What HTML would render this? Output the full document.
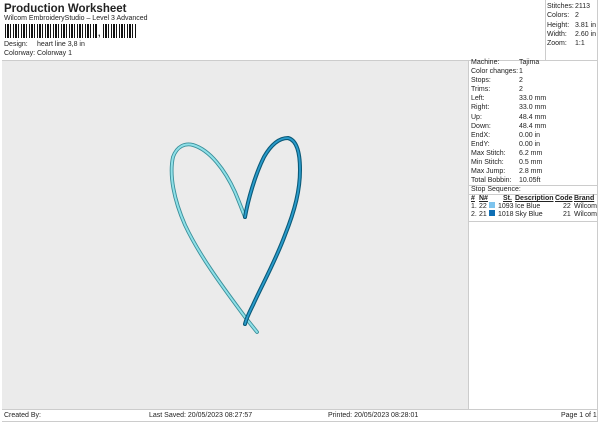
<!DOCTYPE html>
<html><head><meta charset="utf-8"><style>
*{margin:0;padding:0;box-sizing:border-box}
body{width:600px;height:424px;background:#fff;font-family:"Liberation Sans",sans-serif;color:#222;position:relative;overflow:hidden;font-size:7px}
.a{position:absolute;white-space:nowrap;line-height:8px}
.b{font-weight:bold}
.u{text-decoration:underline;font-weight:bold}
</style></head><body>
<div class="a b" style="left:4px;top:3px;font-size:11.5px;line-height:13px">Production Worksheet</div>
<div class="a" style="left:4px;top:15px">Wilcom EmbroideryStudio – Level 3 Advanced</div>
<div class="a" style="left:5px;top:24px;width:92px;height:14px;background:repeating-linear-gradient(90deg,#111 0 1px,#fff 1px 2px,#111 2px 4px,#fff 4px 5px,#111 5px 6px,#fff 6px 8px)"></div>
<div class="a b" style="left:98px;top:29px;font-size:9px">,</div>
<div class="a" style="left:103px;top:24px;width:34px;height:14px;background:repeating-linear-gradient(90deg,#111 0 1px,#fff 1px 2px,#111 2px 4px,#fff 4px 5px,#111 5px 6px,#fff 6px 8px)"></div>
<div class="a" style="left:4px;top:41px">Design:</div><div class="a" style="left:37px;top:41px">heart line 3,8 in</div>
<div class="a" style="left:4px;top:50px">Colorway:</div><div class="a" style="left:37px;top:50px">Colorway 1</div>
<div class="a" style="left:545px;top:0;width:53px;height:60px;border-left:1px solid #ccc"></div>
<div class="a" style="left:547px;top:3px">Stitches:</div><div class="a" style="left:575px;top:3px">2113</div>
<div class="a" style="left:547px;top:12px">Colors:</div><div class="a" style="left:575px;top:12px">2</div>
<div class="a" style="left:547px;top:22px">Height:</div><div class="a" style="left:575px;top:22px">3.81 in</div>
<div class="a" style="left:547px;top:31px">Width:</div><div class="a" style="left:575px;top:31px">2.60 in</div>
<div class="a" style="left:547px;top:40px">Zoom:</div><div class="a" style="left:575px;top:40px">1:1</div>
<div class="a" style="left:2px;top:60px;width:596px;height:1px;background:#ccc"></div>
<div class="a" style="left:2px;top:61px;width:466px;height:348px;background:#ebebeb"></div>
<div class="a" style="left:597px;top:0;width:1px;height:422px;background:#ccc"></div>
<div class="a" style="left:468px;top:61px;width:1px;height:348px;background:#ccc"></div>
<svg class="a" style="left:0;top:0" width="600" height="424">
<path d="M257,332 L245,317 C225,290 200,257 185,225 C174,200 169,175 173,157 C177,146 185,143 193,145 C210,150 225,170 235,192 C240,204 243,212 245,217" fill="none" stroke="#3b8f9a" stroke-width="3.8" stroke-linecap="round"/>
<path d="M257,332 L245,317 C225,290 200,257 185,225 C174,200 169,175 173,157 C177,146 185,143 193,145 C210,150 225,170 235,192 C240,204 243,212 245,217" fill="none" stroke="#8fe0e8" stroke-width="2" stroke-linecap="round"/>
<path d="M245,217 C248,200 255,175 264,157 C272,143 280,138 288,138 C296,140 300,150 300,170 C300,190 295,210 285,235 C275,262 262,285 253,305 C249,313 246,320 245,324" fill="none" stroke="#0b5a78" stroke-width="4" stroke-linecap="round"/>
<path d="M245,217 C248,200 255,175 264,157 C272,143 280,138 288,138 C296,140 300,150 300,170 C300,190 295,210 285,235 C275,262 262,285 253,305 C249,313 246,320 245,324" fill="none" stroke="#2a9ccc" stroke-width="1.8" stroke-linecap="round"/>
</svg>
<div class="a" style="left:469px;top:185px;width:128px;height:1px;background:#ccc"></div>
<div class="a" style="left:469px;top:194px;width:128px;height:1px;background:#ccc"></div>
<div class="a" style="left:469px;top:221px;width:128px;height:1px;background:#ccc"></div>
<div class="a" style="left:471px;top:186px">Stop Sequence:</div>
<div class="a u" style="left:471px;top:195px">#</div><div class="a u" style="left:479px;top:195px">N#</div><div class="a u" style="left:503px;top:195px">St.</div><div class="a u" style="left:515px;top:195px">Description</div><div class="a u" style="left:555px;top:195px">Code</div><div class="a u" style="left:574px;top:195px">Brand</div>
<div class="a" style="left:471px;top:203px">1.</div><div class="a" style="left:479px;top:203px">22</div><div class="a" style="left:489px;top:202px;width:6px;height:6px;background:#7ec4ee"></div><div class="a" style="left:498px;top:203px">1093</div><div class="a" style="left:515px;top:203px">Ice Blue</div><div class="a" style="left:563px;top:203px">22</div><div class="a" style="left:574px;top:203px">Wilcom</div>
<div class="a" style="left:471px;top:211px">2.</div><div class="a" style="left:479px;top:211px">21</div><div class="a" style="left:489px;top:210px;width:6px;height:6px;background:#0f6fb5"></div><div class="a" style="left:498px;top:211px">1018</div><div class="a" style="left:515px;top:211px">Sky Blue</div><div class="a" style="left:563px;top:211px">21</div><div class="a" style="left:574px;top:211px">Wilcom</div>
<div class="a" style="left:2px;top:409px;width:596px;height:1px;background:#ccc"></div>
<div class="a" style="left:2px;top:421px;width:596px;height:1px;background:#ccc"></div>
<div class="a" style="left:4px;top:412px">Created By:</div>
<div class="a" style="left:149px;top:412px">Last Saved: 20/05/2023 08:27:57</div>
<div class="a" style="left:328px;top:412px">Printed: 20/05/2023 08:28:01</div>
<div class="a" style="left:561px;top:412px">Page 1 of 1</div>
<div class="a" style="left:471px;top:58px;line-height:9.1px">Machine:<br>Color changes:<br>Stops:<br>Trims:<br>Left:<br>Right:<br>Up:<br>Down:<br>EndX:<br>EndY:<br>Max Stitch:<br>Min Stitch:<br>Max Jump:<br>Total Bobbin:</div>
<div class="a" style="left:519px;top:58px;line-height:9.1px">Tajima<br>1<br>2<br>2<br>33.0 mm<br>33.0 mm<br>48.4 mm<br>48.4 mm<br>0.00 in<br>0.00 in<br>6.2 mm<br>0.5 mm<br>2.8 mm<br>10.05ft</div>
</body></html>
